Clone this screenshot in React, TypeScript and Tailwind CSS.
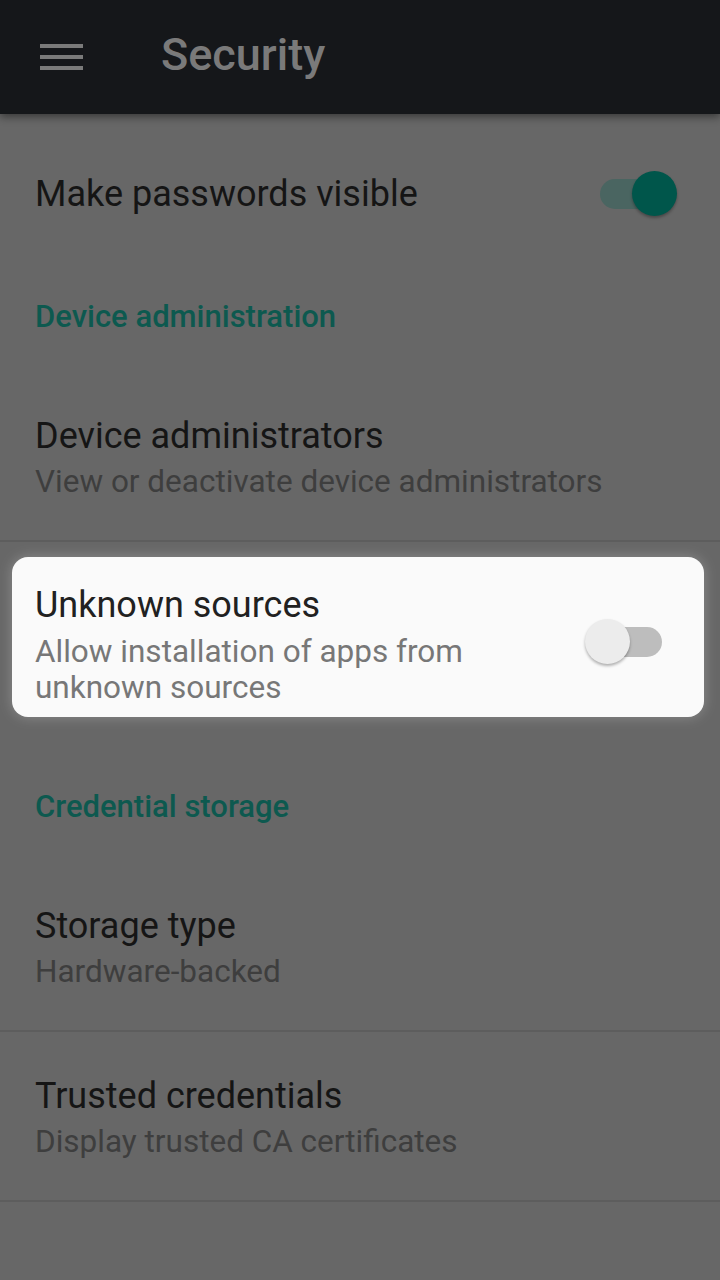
function Toggle({ on }: { on: boolean }) {
  return (
    <div className="relative w-[92px] h-[46px] shrink-0">
      <div
        className={`absolute left-[15px] top-[8px] w-[62px] h-[30px] rounded-full ${
          on ? "bg-[#4a6561]" : "bg-[#bdbdbd]"
        }`}
      />
      <div
        className={`absolute top-0 w-[45px] h-[45px] rounded-full shadow-[0_2px_3px_rgba(0,0,0,0.3)] ${
          on ? "left-[47px] bg-[#00564b]" : "left-0 bg-[#ececec]"
        }`}
      />
    </div>
  );
}

function SectionHeader({ label, pad }: { label: string; pad: string }) {
  return (
    <div className={`px-[35px] ${pad}`}>
      <div className="text-[31px] leading-[36px] font-medium text-[#0d594f]">{label}</div>
    </div>
  );
}

function TwoLineRow({ title, subtitle }: { title: string; subtitle: string }) {
  return (
    <div className="h-[170px] border-b-2 border-[#5d5d5d] px-[35px] pt-[43px]">
      <div className="text-[36px] leading-[42px] text-[#151515]">{title}</div>
      <div className="mt-[7px] text-[31.5px] leading-[36px] text-[#3e3e3e]">{subtitle}</div>
    </div>
  );
}

export default function App() {
  return (
    <div
      className="w-[720px] h-[1280px] overflow-hidden bg-[#676767]"
      style={{ fontFamily: "Roboto, 'Noto Sans', sans-serif" }}
    >
      <header className="relative z-10 h-[114px] bg-[#15171a] flex items-center shadow-[0_3px_8px_rgba(0,0,0,0.45)]">
        <div className="ml-[40px] w-[43px] flex flex-col gap-[7px]">
          <div className="h-[4px] bg-[#7a7a7a]" />
          <div className="h-[4px] bg-[#7a7a7a]" />
          <div className="h-[4px] bg-[#7a7a7a]" />
        </div>
        <div className="ml-[78px] text-[45px] font-medium text-[#7a7a7a] leading-none pb-[6px]">
          Security
        </div>
      </header>

      <div className="h-[160px] flex items-center justify-between pl-[35px] pr-[43px]">
        <div className="text-[36px] leading-[42px] text-[#151515]">Make passwords visible</div>
        <Toggle on />
      </div>

      <div className="h-[98px]">
        <SectionHeader label="Device administration" pad="pt-[25px]" />
      </div>

      <TwoLineRow title="Device administrators" subtitle="View or deactivate device administrators" />

      <div className="h-[204px] pt-[15px] pl-[12px] pr-[16px]">
        <div className="h-[160px] bg-[#fafafa] rounded-[16px] flex items-start justify-between pl-[23px] pr-[27px] shadow-[0_0_14px_rgba(255,255,255,0.25)]">
          <div className="pt-[27px]">
            <div className="text-[36px] leading-[42px] text-[#212121]">Unknown sources</div>
            <div className="mt-[8px] text-[31.5px] leading-[36px] text-[#777777] w-[470px]">
              Allow installation of apps from unknown sources
            </div>
          </div>
          <div className="pt-[62px]">
            <Toggle on={false} />
          </div>
        </div>
      </div>

      <div className="h-[116px]">
        <SectionHeader label="Credential storage" pad="pt-[43px]" />
      </div>

      <TwoLineRow title="Storage type" subtitle="Hardware-backed" />
      <TwoLineRow title="Trusted credentials" subtitle="Display trusted CA certificates" />
    </div>
  );
}
